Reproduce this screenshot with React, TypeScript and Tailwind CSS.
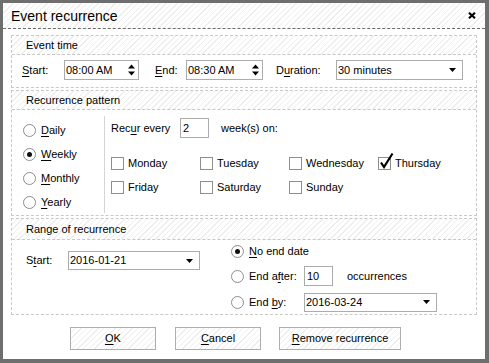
import type { ReactNode } from 'react'

const hatch =
  'bg-[repeating-linear-gradient(135deg,#ffffff_0px,#ffffff_3px,#eeeeee_3px,#eeeeee_4px)]'

function Key({ pre = '', k, post = '' }: { pre?: string; k: string; post?: string }) {
  return (
    <span className="whitespace-pre">
      {pre}
      <span className="underline underline-offset-[2px]">{k}</span>
      {post}
    </span>
  )
}

function Group({
  title,
  headerH,
  children,
  className = '',
}: {
  title: string
  headerH: string
  children: ReactNode
  className?: string
}) {
  return (
    <section className={`mx-[8px] border border-dashed border-[#c8c8c8] ${className}`}>
      <div className={`flex items-center border-b border-dashed border-[#c8c8c8] pl-[14px] ${headerH} ${hatch}`}>
        {title}
      </div>
      {children}
    </section>
  )
}

function DownArrow() {
  return (
    <svg width="7" height="4" viewBox="0 0 7 4" className="shrink-0">
      <path d="M0 0H7L3.5 4Z" fill="#000" />
    </svg>
  )
}

function TimeInput({ value, w }: { value: string; w: string }) {
  return (
    <div className={`flex h-[20px] items-center justify-between border border-[#acacac] pl-[1px] pr-[3px] ${w}`}>
      <span>{value}</span>
      <svg width="7" height="12" viewBox="0 0 7 12">
        <path d="M0 4.5H7L3.5 0.5Z" fill="#000" />
        <path d="M0 7.5H7L3.5 11.5Z" fill="#000" />
      </svg>
    </div>
  )
}

function Select({ value, w, h = 'h-[20px]' }: { value: string; w: string; h?: string }) {
  return (
    <div className={`flex items-center justify-between border border-[#acacac] pl-[1px] pr-[6px] ${w} ${h}`}>
      <span>{value}</span>
      <DownArrow />
    </div>
  )
}

function Radio({ checked, children }: { checked?: boolean; children: ReactNode }) {
  return (
    <div className="flex h-[20px] items-center gap-[5px]">
      <span className="flex h-[13px] w-[13px] items-center justify-center rounded-full border border-[#8e8e8e] bg-white">
        {checked && <span className="h-[5px] w-[5px] rounded-full bg-[#111]" />}
      </span>
      {children}
    </div>
  )
}

function Check({ label, checked }: { label: string; checked?: boolean }) {
  return (
    <div className="flex h-[20px] items-center gap-[4px]">
      <span className="relative h-[13px] w-[13px] border border-[#8f8f8f] bg-white">
        {checked && (
          <svg
            width="15"
            height="17"
            viewBox="0 0 15 17"
            className="absolute left-[0px] top-[-6px]"
          >
            <path d="M2 10.5L5 15L13.5 1.5" stroke="#000" strokeWidth="2.2" fill="none" />
          </svg>
        )}
      </span>
      <span>{label}</span>
    </div>
  )
}

function Button({ w, children }: { w: string; children: ReactNode }) {
  return (
    <div className={`flex h-[23px] items-center justify-center border border-[#adadad] ${hatch} ${w}`}>
      {children}
    </div>
  )
}

export default function App() {
  return (
    <div className="h-[363px] w-[489px] bg-[#6e6e6e] pb-[4px] pl-[3px] pr-[4px] pt-[3px] font-['Liberation_Sans',Arial,sans-serif] text-[11px] text-black">
      <div className="flex h-full flex-col bg-white">
        <header className={`flex h-[26px] items-center justify-between border-b border-dashed border-[#6b6b6b] pl-[8px] pr-[8px] ${hatch}`}>
          <span className="text-[14px] leading-none">Event recurrence</span>
          <svg width="8" height="7" viewBox="0 0 8 7" className="mr-[1px]">
            <path d="M1 0.8L7 6.2M7 0.8L1 6.2" stroke="#000" strokeWidth="2.2" />
          </svg>
        </header>

        <Group title="Event time" headerH="h-[19px]" className="mt-[6px]">
          <div className="flex h-[32px] items-start pl-[10px] pt-[5px]">
            <span className="flex h-[20px] w-[42px] items-center">
              <Key k="S" post="tart:" />
            </span>
            <TimeInput value="08:00 AM" w="w-[75px]" />
            <span className="ml-[16px] flex h-[20px] w-[31px] items-center">
              <Key k="E" post="nd:" />
            </span>
            <TimeInput value="08:30 AM" w="w-[77px]" />
            <span className="ml-[13px] flex h-[20px] w-[60px] items-center">
              <Key pre="D" k="u" post="ration:" />
            </span>
            <Select value="30 minutes" w="w-[127px]" />
          </div>
        </Group>

        <Group title="Recurrence pattern" headerH="h-[19px]" className="mt-[2px]">
          <div className="flex h-[105px]">
            <div className="flex w-[92px] flex-col pl-[11px] pt-[10px] gap-[4px]">
              <Radio>
                <Key k="D" post="aily" />
              </Radio>
              <Radio checked>
                <Key k="W" post="eekly" />
              </Radio>
              <Radio>
                <Key k="M" post="onthly" />
              </Radio>
              <Radio>
                <Key k="Y" post="early" />
              </Radio>
            </div>
            <div className="mb-[2px] mt-[6px] w-px bg-[#d4d4d4]" />
            <div className="flex flex-col pl-[6px] pt-[8px]">
              <div className="flex h-[20px] items-center">
                <span className="w-[69px]">
                  <Key pre="Rec" k="u" post="r every" />
                </span>
                <div className="flex h-[20px] w-[29px] items-center border border-[#acacac] pl-[2px]">2</div>
                <span className="ml-[12px]">week(s) on:</span>
              </div>
              <div className="mt-[15px] grid grid-cols-[89px_89px_89px_89px] gap-y-[4px]">
                <Check label="Monday" />
                <Check label="Tuesday" />
                <Check label="Wednesday" />
                <Check label="Thursday" checked />
                <Check label="Friday" />
                <Check label="Saturday" />
                <Check label="Sunday" />
              </div>
            </div>
          </div>
        </Group>

        <Group title="Range of recurrence" headerH="h-[21px]" className="mt-[2px]">
          <div className="flex h-[74px]">
            <div className="flex w-[219px] items-start pl-[14px] pt-[11px]">
              <span className="flex h-[19px] w-[42px] items-center">
                <Key pre="S" k="t" post="art:" />
              </span>
              <Select value="2016-01-21" w="w-[132px]" h="h-[19px]" />
            </div>
            <div className="flex flex-col pt-[1px]">
              <Radio checked>
                <Key k="N" post="o end date" />
              </Radio>
              <div className="mt-[5px]">
                <Radio>
                  <span className="w-[50px]">
                    <Key pre="End a" k="f" post="ter:" />
                  </span>
                  <div className="flex h-[20px] w-[29px] items-center border border-[#acacac] pl-[2px]">10</div>
                  <span className="ml-[9px]">occurrences</span>
                </Radio>
              </div>
              <div className="mt-[6px]">
                <Radio>
                  <span className="w-[50px]">
                    <Key pre="End " k="b" post="y:" />
                  </span>
                  <Select value="2016-03-24" w="w-[133px]" h="h-[19px]" />
                </Radio>
              </div>
            </div>
          </div>
        </Group>

        <div className="mt-[12px] flex pl-[67px]">
          <Button w="w-[86px]">
            <Key k="O" post="K" />
          </Button>
          <div className="ml-[19px]">
            <Button w="w-[86px]">
              <Key k="C" post="ancel" />
            </Button>
          </div>
          <div className="ml-[18px]">
            <Button w="w-[122px]">
              <Key k="R" post="emove recurrence" />
            </Button>
          </div>
        </div>
      </div>
    </div>
  )
}
